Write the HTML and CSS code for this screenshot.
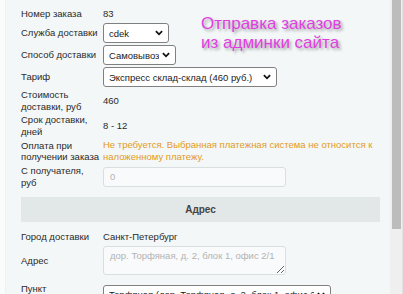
FILE: index.html
```html
<!DOCTYPE html>
<html lang="ru">
<head>
    <meta charset="UTF-8">
    <meta name="viewport" content="width=device-width, initial-scale=1.0">
    <title>Заказ 83 — доставка</title>
    <link rel="stylesheet" href="styles.css">
</head>
<body>

    <div class="page">
        <div class="panel">
            <div class="form">
                <div class="row single">
                    <span class="label">Номер заказа</span>
                    <span class="value">83</span>
                </div>
                <div class="row">
                    <label class="label" for="service">Служба доставки</label>
                    <select id="service" class="select w-service">
                        <option>cdek</option>
                    </select>
                </div>
                <div class="row">
                    <label class="label" for="method">Способ доставки</label>
                    <select id="method" class="select w-method">
                        <option>Самовывоз</option>
                    </select>
                </div>
                <div class="row">
                    <label class="label" for="tariff">Тариф</label>
                    <select id="tariff" class="select w-tariff">
                        <option>Экспресс склад-склад (460 руб.)</option>
                    </select>
                </div>
                <div class="row">
                    <span class="label">Стоимость<br>доставки, руб</span>
                    <span class="value">460</span>
                </div>
                <div class="row">
                    <span class="label">Срок доставки,<br>дней</span>
                    <span class="value">8 - 12</span>
                </div>
                <div class="row">
                    <span class="label">Оплата при<br>получении заказа</span>
                    <span class="value warning">Не требуется. Выбранная платежная система не относится к наложенному платежу.</span>
                </div>
                <div class="row">
                    <label class="label" for="cod">С получателя,<br>руб</label>
                    <input id="cod" class="field" type="text" placeholder="0">
                </div>
            </div>

            <div class="section-title">Адрес</div>

            <div class="form">
                <div class="row single">
                    <span class="label">Город доставки</span>
                    <span class="value">Санкт-Петербург</span>
                </div>
                <div class="row">
                    <label class="label" for="address">Адрес</label>
                    <textarea id="address" class="field area" placeholder="дор. Торфяная, д. 2, блок 1, офис 2/1"></textarea>
                </div>
                <div class="row spaced">
                    <label class="label" for="point">Пункт<br>выдачи</label>
                    <select id="point" class="select w-point">
                        <option>Торфяная (дор. Торфяная, д. 2, блок 1, офис 2/1)</option>
                    </select>
                </div>
            </div>
        </div>

        <div class="scrollbar"><div class="thumb"></div></div>
        <div class="edge"></div>

        <div class="promo">Отправка заказов<br>из админки сайта</div>
    </div>

</body>
</html>
```

FILE: styles.css
```css
body {
    margin: 0;
    background: #fafbfb;
    font-family: "Liberation Sans", Arial, sans-serif;
    font-size: 9.5px;
    color: #2a2a2a;
    overflow: hidden;
}

.page {
    position: relative;
    display: flex;
    height: 294px;
    overflow: hidden;
}

.panel {
    width: 361px;
    margin-left: 5px;
    padding: 7px 10px 0 15px;
    background: #f3f7f8;
    border-left: 1px solid #eef1f2;
}

.form {
    display: flex;
    flex-direction: column;
    gap: 2px;
}

.row {
    display: grid;
    grid-template-columns: 82px 1fr;
    align-items: center;
}

.row.spaced {
    margin-top: 6px;
}

.label {
    line-height: 11.5px;
    white-space: nowrap;
}

.value {
    line-height: 12px;
}

.single .label,
.single .value {
    line-height: 14px;
}

.warning {
    color: #e49a22;
}

/* selects with a custom arrow */
.select {
    -webkit-appearance: none;
    appearance: none;
    height: 20px;
    padding: 0 16px 0 5px;
    border: 1px solid #808080;
    border-radius: 3px;
    background-color: #fff;
    background-image: url("data:image/svg+xml,%3csvg xmlns='http://www.w3.org/2000/svg' viewBox='0 0 9 6'%3e%3cpath d='M1 1l3.5 3.5L8 1' fill='none' stroke='%23111' stroke-width='2'/%3e%3c/svg%3e");
    background-repeat: no-repeat;
    background-position: right 5px center;
    background-size: 8px 6px;
    font-family: inherit;
    font-size: 9.5px;
    color: #1a1a1a;
    white-space: nowrap;
}

.w-service { width: 66px; }
.w-method { width: 73px; }
.w-tariff { width: 174px; }
.w-point { width: 228px; }

.field {
    width: 183px;
    height: 20px;
    box-sizing: border-box;
    padding: 0 6px;
    border: 1px solid #d8dfe0;
    border-radius: 3px;
    background: #f8fafb;
    font-family: inherit;
    font-size: 9.5px;
    color: #333;
}

.field::placeholder {
    color: #b3b3b3;
}

.area {
    height: 29px;
    padding: 3px 6px;
    line-height: 12px;
}

.section-title {
    margin: 9px 0 8px;
    height: 25px;
    line-height: 25px;
    background: #e2e7e8;
    text-align: center;
    font-weight: bold;
    font-size: 10px;
    color: #444;
}

/* fake window scrollbar */
.scrollbar {
    width: 12px;
    background: #efefef;
}

.thumb {
    width: 9px;
    height: 229px;
    margin-left: 2px;
    background: #bcbcbc;
}

.edge {
    flex: 1;
    border-left: 1px solid #e2e2e2;
    background: #f7f7f7;
}

.promo {
    position: absolute;
    left: 201px;
    top: 14px;
    font-size: 17px;
    line-height: 19px;
    color: #e03fe0;
    text-shadow: 2px 2px 3px rgba(0, 0, 0, 0.35);
}
```
